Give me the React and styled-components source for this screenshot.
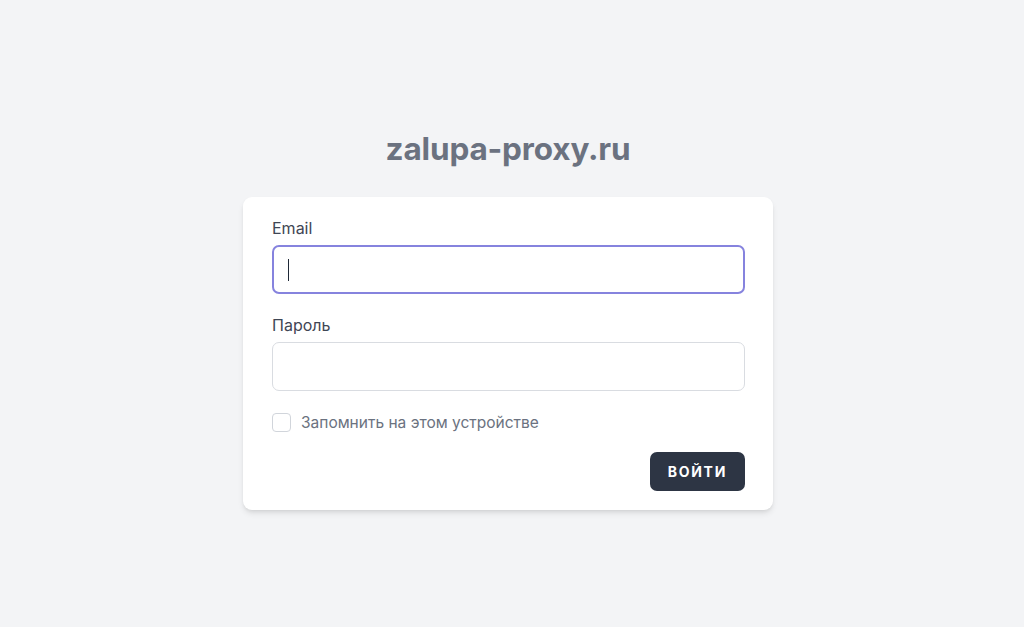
import React from "react";
import styled, { createGlobalStyle } from "styled-components";

const GlobalStyle = createGlobalStyle`
  * { box-sizing: border-box; }
  html, body { margin: 0; padding: 0; }
  body {
    background: #f3f4f6;
    font-family: Inter, "Noto Sans", "Liberation Sans", sans-serif;
  }
`;

const App = () => {
  return (
    <>
      <GlobalStyle />
      <Page>
        <Title>zalupa-proxy.ru</Title>
        <Card>
          <Group>
            <Label>Email</Label>
            <Field $focused>
              <Caret />
              <Input type="email" />
            </Field>
          </Group>
          <Group $gap>
            <Label>Пароль</Label>
            <Field>
              <Input type="password" />
            </Field>
          </Group>
          <Remember>
            <Check type="checkbox" />
            <RememberText>Запомнить на этом устройстве</RememberText>
          </Remember>
          <Actions>
            <Button>Войти</Button>
          </Actions>
        </Card>
      </Page>
    </>
  );
};

export default App;

// страница
const Page = styled.div`
  min-height: 100vh;
  display: flex;
  flex-direction: column;
  align-items: center;
  padding-top: 127px;
  padding-right: 8px;
`;

const Title = styled.div`
  font-size: 31.5px;
  font-weight: 700;
  color: #6b7280;
  line-height: 44px;
  margin-bottom: 26px;
  letter-spacing: -0.15px;
`;

// карточка формы
const Card = styled.div`
  width: 530px;
  background: #fff;
  border-radius: 9px;
  padding: 19px 28px 19px 29px;
  box-shadow: 0 4px 6px -1px rgba(0, 0, 0, 0.1), 0 2px 4px -2px rgba(0, 0, 0, 0.1);
`;

const Group = styled.div`
  display: flex;
  flex-direction: column;
  margin-top: ${(p) => (p.$gap ? "19px" : "0")};
`;

const Label = styled.label`
  font-size: 16px;
  line-height: 24px;
  font-weight: 400;
  color: #3f4654;
`;

const Field = styled.div`
  margin-top: 5px;
  height: 49px;
  display: flex;
  align-items: center;
  border-radius: 7px;
  border: ${(p) => (p.$focused ? "2px solid #8683de" : "1px solid #d9dce1")};
  padding: 0 14px 0 ${(p) => (p.$focused ? "14px" : "15px")};
  background: #fff;
`;

const Caret = styled.span`
  width: 1px;
  height: 22px;
  background: #1f2937;
  flex-shrink: 0;
`;

const Input = styled.input`
  flex: 1;
  border: none;
  outline: none;
  background: transparent;
  font: inherit;
  font-size: 16px;
  padding: 0;
  min-width: 0;
`;

const Remember = styled.label`
  margin-top: 19px;
  display: flex;
  align-items: center;
  gap: 10px;
  height: 24px;
`;

const Check = styled.input`
  appearance: none;
  margin: 0;
  width: 19px;
  height: 19px;
  border: 1px solid #d1d5db;
  border-radius: 4px;
  background: #fff;
`;

const RememberText = styled.span`
  font-size: 15.5px;
  color: #6b7280;
`;

const Actions = styled.div`
  display: flex;
  justify-content: flex-end;
  margin-top: 18px;
`;

const Button = styled.button`
  height: 39px;
  padding: 0 18px;
  border: none;
  border-radius: 7px;
  background: #2d3544;
  color: #fff;
  font-family: inherit;
  font-size: 14px;
  font-weight: 700;
  letter-spacing: 0.12em;
  text-transform: uppercase;
  cursor: pointer;
`;
